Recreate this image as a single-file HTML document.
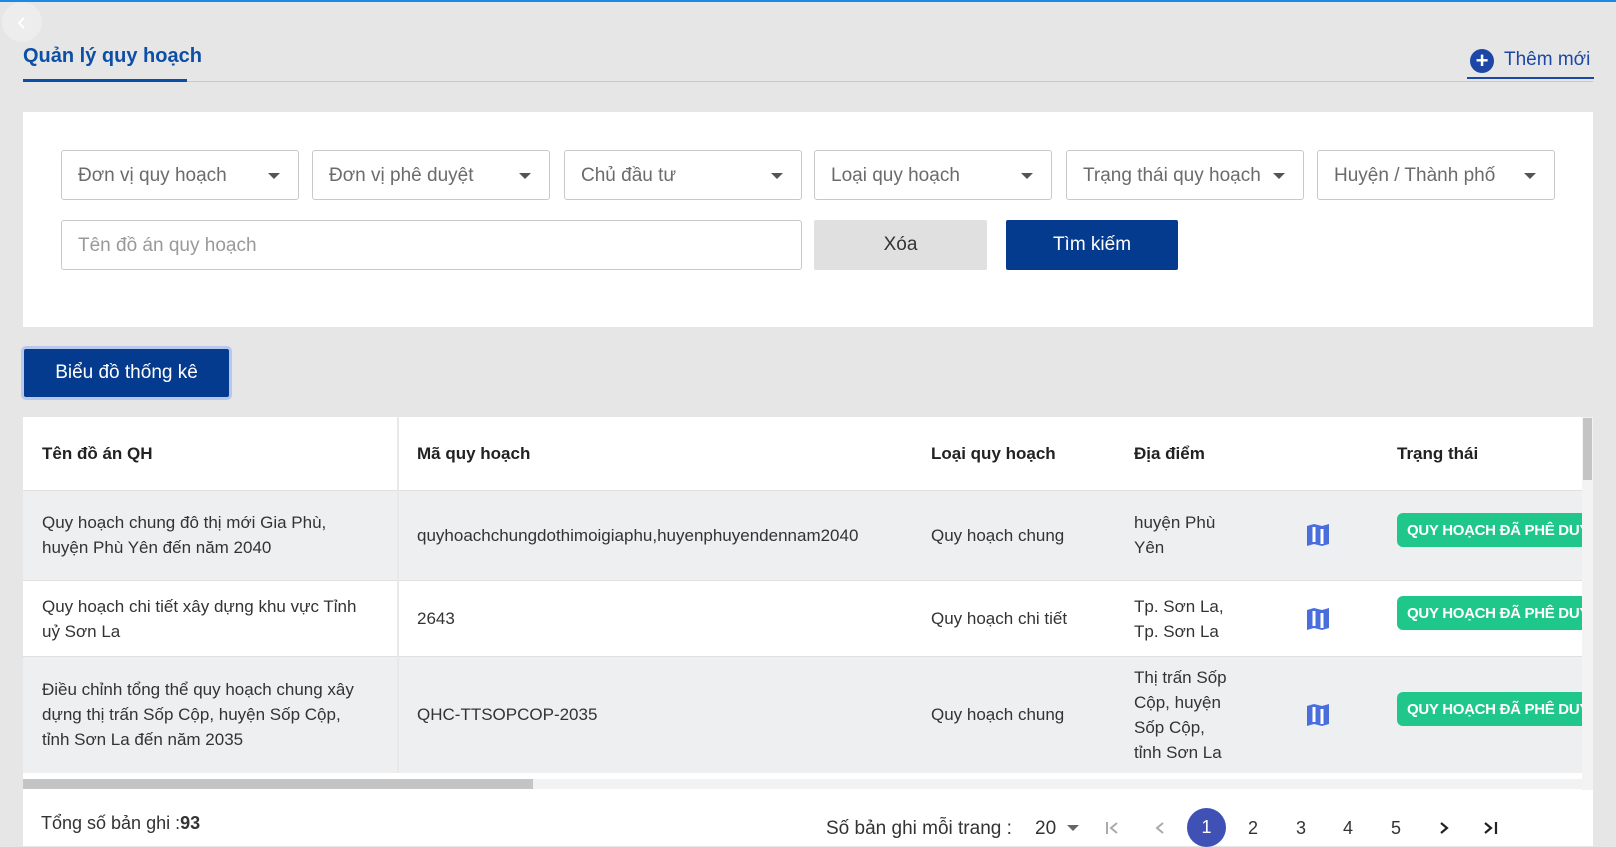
<!DOCTYPE html>
<html><head><meta charset="utf-8"><style>
*{box-sizing:border-box;margin:0;padding:0}
body{width:1616px;height:846px;overflow:hidden;background:#e6e6e6;font-family:"Liberation Sans",sans-serif;color:#222;position:relative}
.a{position:absolute}
.dd{position:absolute;top:150px;height:50px;border:1px solid #c9c9c9;border-radius:3px;background:#fff;color:#6b6b6b;font-size:19px;padding:14px 16px;white-space:nowrap}
.dd:after{content:"";position:absolute;right:18px;top:22px;border:6px solid transparent;border-top:6px solid #555;border-bottom:0}
.dd.n:after{display:none}
.th{position:absolute;top:444px;font-size:17px;font-weight:bold;color:#222}
.cell{position:absolute;font-size:17px;line-height:25px;color:#333}
.badge{position:absolute;left:1397px;width:185px;height:34px;background:#1fc78a;border-radius:6px 0 0 6px;color:#fff;font-weight:bold;font-size:15px;padding:9px 10px;white-space:nowrap;overflow:hidden;letter-spacing:-0.3px}
.pg{position:absolute;top:818px;font-size:18px;color:#333}
</style></head><body>
<div class="a" style="left:0;top:0;width:1616px;height:2px;background:#1e88e5"></div>
<div class="a" style="left:2px;top:2px;width:40px;height:40px;border-radius:50%;background:#ededed"></div>
<svg class="a" style="left:16px;top:16px" width="12" height="14" viewBox="0 0 12 14"><path d="M8 2 L3 7 L8 12" fill="none" stroke="#fff" stroke-width="2"/></svg>
<div class="a" style="left:23px;top:45px;font-size:20px;font-weight:bold;color:#0d4ea6">Quản lý quy hoạch</div>
<div class="a" style="left:23px;top:81px;width:1570px;height:1px;background:#c8c8c8"></div>
<div class="a" style="left:23px;top:79px;width:164px;height:3px;background:#0d4ea6"></div>
<div class="a" style="left:1470px;top:49px;width:24px;height:24px;border-radius:50%;background:#1c47a6;color:#fff;text-align:center;font-size:22px;line-height:23px;font-weight:bold">+</div>
<div class="a" style="left:1504px;top:49px;font-size:19px;color:#1c47a6">Thêm mới</div>
<div class="a" style="left:1467px;top:77px;width:127px;height:2px;background:#1c47a6"></div>

<div class="a" style="left:23px;top:112px;width:1570px;height:215px;background:#fff"></div>
<div class="dd" style="left:61px;width:238px">Đơn vị quy hoạch</div>
<div class="dd" style="left:312px;width:238px">Đơn vị phê duyệt</div>
<div class="dd" style="left:564px;width:238px">Chủ đầu tư</div>
<div class="dd" style="left:814px;width:238px">Loại quy hoạch</div>
<div class="dd" style="left:1066px;width:238px">Trạng thái quy hoạch</div>
<div class="dd" style="left:1317px;width:238px">Huyện / Thành phố</div>
<div class="dd n" style="left:61px;top:220px;width:741px;color:#999;">Tên đồ án quy hoạch</div>
<div class="a" style="left:814px;top:220px;width:173px;height:50px;background:#e0e0e0;border-radius:2px;text-align:center;line-height:50px;font-size:19px;color:#333">Xóa</div>
<div class="a" style="left:1006px;top:220px;width:172px;height:50px;background:#053b8e;border-radius:2px;text-align:center;line-height:50px;font-size:19px;color:#fff">Tìm kiếm</div>
<div class="a" style="left:21px;top:346px;width:211px;height:54px;border:3px solid #b8c8ec;border-radius:5px;background:#053b8e;color:#fff;text-align:center;line-height:48px;font-size:19px">Biểu đồ thống kê</div>

<div class="a" style="left:23px;top:417px;width:1570px;height:429px;background:#fff"></div>
<div class="a" style="left:1582px;top:417px;width:11px;height:373px;background:#f3f3f3"></div>
<div class="a" style="left:1583px;top:418px;width:9px;height:62px;background:#c4c4c4"></div>
<div class="a" style="left:23px;top:490px;width:1559px;height:90px;background:#eeeff1;border-top:1px solid #e0e0e0"></div>
<div class="a" style="left:23px;top:580px;width:1559px;height:1px;background:#e0e0e0"></div>
<div class="a" style="left:23px;top:656px;width:1559px;height:117px;background:#eeeff1;border-top:1px solid #e0e0e0"></div>
<div class="a" style="left:397px;top:417px;width:2px;height:356px;background:#e8e8e8"></div>
<div class="a" style="left:23px;top:779px;width:1559px;height:10px;background:#f2f2f2"></div>
<div class="a" style="left:23px;top:779px;width:510px;height:10px;background:#c4c4c4"></div>

<div class="th" style="left:42px">Tên đồ án QH</div>
<div class="th" style="left:417px">Mã quy hoạch</div>
<div class="th" style="left:931px">Loại quy hoạch</div>
<div class="th" style="left:1134px">Địa điểm</div>
<div class="th" style="left:1397px">Trạng thái</div>

<div class="cell" style="left:42px;top:510px">Quy hoạch chung đô thị mới Gia Phù,<br>huyện Phù Yên đến năm 2040</div>
<div class="cell" style="left:417px;top:523px">quyhoachchungdothimoigiaphu,huyenphuyendennam2040</div>
<div class="cell" style="left:931px;top:523px">Quy hoạch chung</div>
<div class="cell" style="left:1134px;top:510px">huyện Phù<br>Yên</div>
<div class="badge" style="top:513px">QUY HOẠCH ĐÃ PHÊ DUYỆT</div>

<div class="cell" style="left:42px;top:594px">Quy hoạch chi tiết xây dựng khu vực Tỉnh<br>uỷ Sơn La</div>
<div class="cell" style="left:417px;top:606px">2643</div>
<div class="cell" style="left:931px;top:606px">Quy hoạch chi tiết</div>
<div class="cell" style="left:1134px;top:594px">Tp. Sơn La,<br>Tp. Sơn La</div>
<div class="badge" style="top:596px">QUY HOẠCH ĐÃ PHÊ DUYỆT</div>

<div class="cell" style="left:42px;top:677px">Điều chỉnh tổng thể quy hoạch chung xây<br>dựng thị trấn Sốp Cộp, huyện Sốp Cộp,<br>tỉnh Sơn La đến năm 2035</div>
<div class="cell" style="left:417px;top:702px">QHC-TTSOPCOP-2035</div>
<div class="cell" style="left:931px;top:702px">Quy hoạch chung</div>
<div class="cell" style="left:1134px;top:665px">Thị trấn Sốp<br>Cộp, huyện<br>Sốp Cộp,<br>tỉnh Sơn La</div>
<div class="badge" style="top:692px">QUY HOẠCH ĐÃ PHÊ DUYỆT</div>

<svg class="a" style="left:1306px;top:523px" width="24" height="24" viewBox="0 0 24 24"><path d="M1 3 L8 1 L16 3 L23 1 L23 21 L16 23 L8 21 L1 23Z" fill="#4a6fdc"/><path d="M8 4v15M16 6v15" stroke="#fff" stroke-width="3"/></svg>
<svg class="a" style="left:1306px;top:607px" width="24" height="24" viewBox="0 0 24 24"><path d="M1 3 L8 1 L16 3 L23 1 L23 21 L16 23 L8 21 L1 23Z" fill="#4a6fdc"/><path d="M8 4v15M16 6v15" stroke="#fff" stroke-width="3"/></svg>
<svg class="a" style="left:1306px;top:703px" width="24" height="24" viewBox="0 0 24 24"><path d="M1 3 L8 1 L16 3 L23 1 L23 21 L16 23 L8 21 L1 23Z" fill="#4a6fdc"/><path d="M8 4v15M16 6v15" stroke="#fff" stroke-width="3"/></svg>

<div class="a" style="left:41px;top:813px;font-size:18px;color:#333">Tổng số bản ghi :<b>93</b></div>
<div class="pg" style="left:826px;font-size:19px">Số bản ghi mỗi trang :</div>
<div class="pg" style="left:1035px;font-size:19px">20</div>
<div class="a" style="left:1067px;top:825px;border:6px solid transparent;border-top:6px solid #666;border-bottom:0"></div>
<svg class="a" style="left:1104px;top:820px" width="16" height="16" viewBox="0 0 16 16"><path d="M3 2v12M13 3L7 8l6 5" fill="none" stroke="#aaa" stroke-width="2"/></svg>
<svg class="a" style="left:1152px;top:820px" width="16" height="16" viewBox="0 0 16 16"><path d="M11 3L5 8l6 5" fill="none" stroke="#aaa" stroke-width="2"/></svg>
<div class="a" style="left:1187px;top:808px;width:39px;height:39px;border-radius:50%;background:#3f51b5;color:#fff;text-align:center;line-height:39px;font-size:18px">1</div>
<div class="pg" style="left:1248px">2</div>
<div class="pg" style="left:1296px">3</div>
<div class="pg" style="left:1343px">4</div>
<div class="pg" style="left:1391px">5</div>
<svg class="a" style="left:1436px;top:820px" width="16" height="16" viewBox="0 0 16 16"><path d="M5 3l6 5-6 5" fill="none" stroke="#222" stroke-width="2.2"/></svg>
<svg class="a" style="left:1482px;top:820px" width="18" height="16" viewBox="0 0 18 16"><path d="M3 3l6 5-6 5" fill="none" stroke="#222" stroke-width="2.2"/><path d="M14 2v12" stroke="#222" stroke-width="2.2"/></svg>
</body></html>
